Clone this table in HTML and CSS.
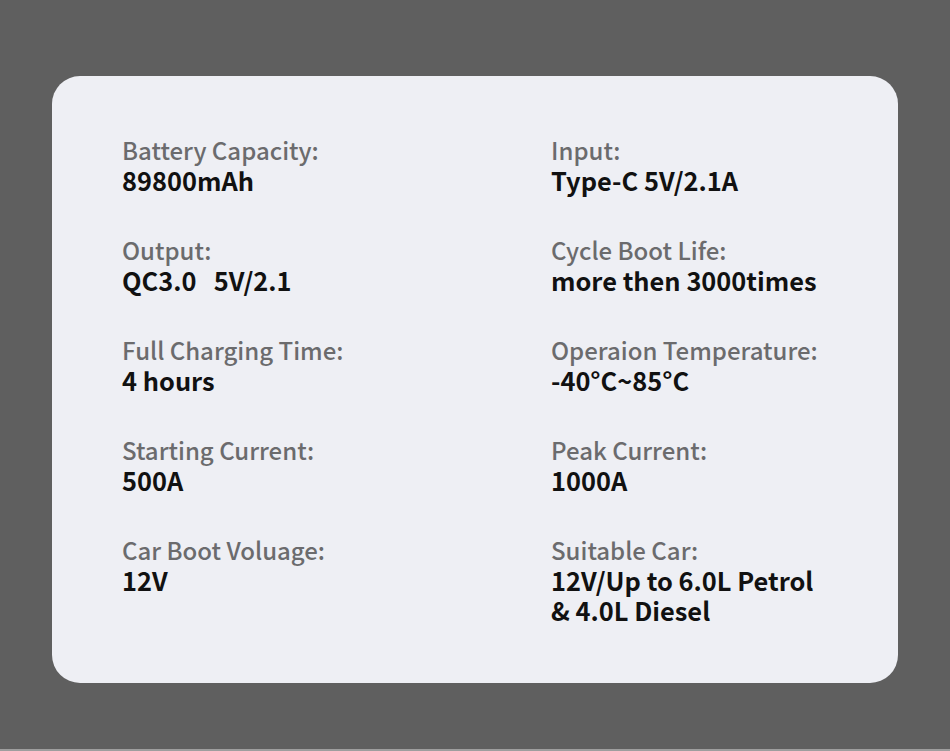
FILE: index.html
```html
<!DOCTYPE html>
<html>
<head>
<meta charset="utf-8">
<link rel="stylesheet" href="styles.css">
</head>
<body>
<div class="card">
  <div class="spec"><div class="label">Battery Capacity:</div><div class="value">89800mAh</div></div>
  <div class="spec"><div class="label">Input:</div><div class="value">Type-C 5V/2.1A</div></div>
  <div class="spec"><div class="label">Output:</div><div class="value">QC3.0&nbsp;&nbsp; 5V/2.1</div></div>
  <div class="spec"><div class="label">Cycle Boot Life:</div><div class="value">more then 3000times</div></div>
  <div class="spec"><div class="label">Full Charging Time:</div><div class="value">4 hours</div></div>
  <div class="spec"><div class="label">Operaion Temperature:</div><div class="value">-40°C~85°C</div></div>
  <div class="spec"><div class="label">Starting Current:</div><div class="value">500A</div></div>
  <div class="spec"><div class="label">Peak Current:</div><div class="value">1000A</div></div>
  <div class="spec"><div class="label">Car Boot Voluage:</div><div class="value">12V</div></div>
  <div class="spec"><div class="label">Suitable Car:</div><div class="value">12V/Up to 6.0L Petrol<br>&amp; 4.0L Diesel</div></div>
</div>
</body>
</html>
```
FILE: styles.css
```css
html, body {
  margin: 0;
  padding: 0;
}
body {
  background: #5f5f5f;
  width: 950px;
  height: 751px;
  overflow: hidden;
  padding-top: 76px;
  box-sizing: border-box;
  border-bottom: 2px solid #9e9e9e;
  font-family: "Noto Sans CJK SC", "Noto Sans", sans-serif;
}
.card {
  margin-left: 52px;
  width: 846px;
  height: 607px;
  box-sizing: border-box;
  background: #eeeff4;
  border-radius: 28px;
  padding: 59px 0 0 70px;
  display: grid;
  grid-template-columns: 429px 1fr;
  grid-auto-rows: min-content;
  row-gap: 40px;
  align-content: start;
}
.label {
  font-size: 24px;
  line-height: 30px;
  font-weight: 500;
  color: #6b6b6d;
}
.value {
  font-size: 25.4px;
  line-height: 30px;
  font-weight: 700;
  color: #111111;
}
```
